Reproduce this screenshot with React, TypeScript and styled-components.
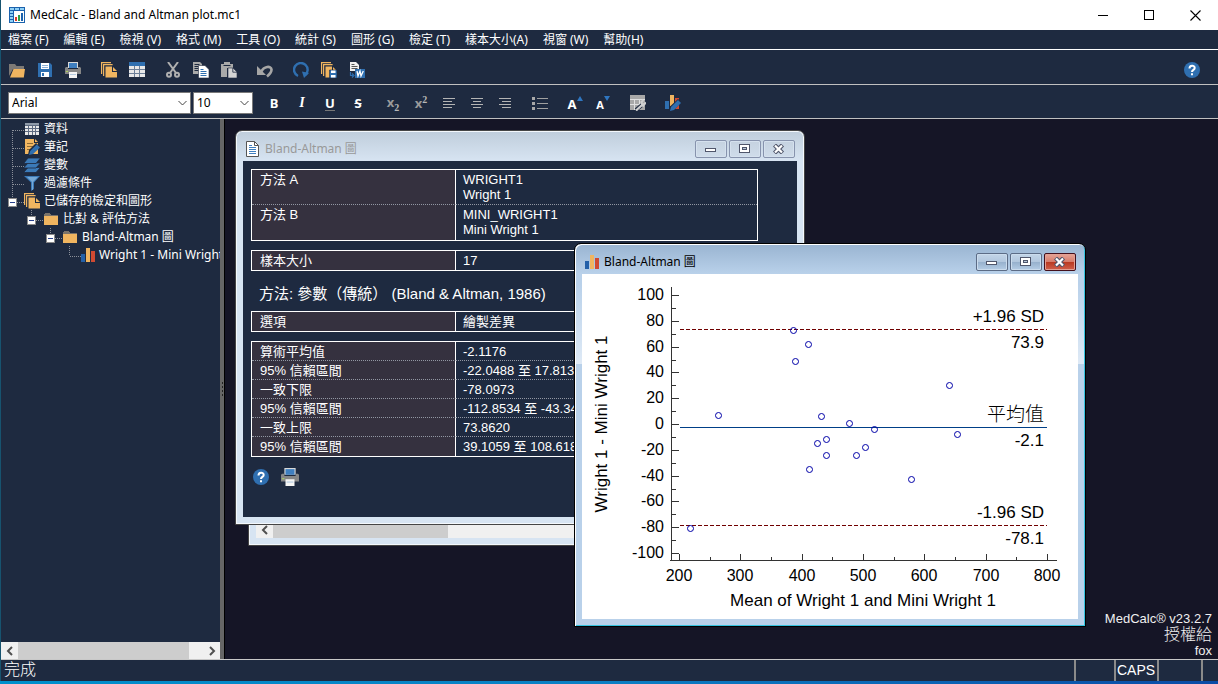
import React from 'react';
import styled, { createGlobalStyle, css } from 'styled-components';

const navy = '#1e2a40';
const desk = '#151526';
const ui = `"Noto Sans", "Noto Sans CJK TC", sans-serif`;
const arial = `"Liberation Sans", "Noto Sans CJK TC", sans-serif`;

const Global = createGlobalStyle`
  *, *::before, *::after { box-sizing: border-box; }
  body { margin: 0; background: ${desk}; font-family: ${ui}; font-size: 12px; color: #fff; }
  button { appearance: none; background: none; border: 0; padding: 0; margin: 0; color: inherit; font: inherit; }
  svg { display: block; flex: none; }
`;

/* ---------- frame ---------- */
const Shell = styled.div`
  min-height: 100vh;
  display: flex;
  flex-direction: column;
  border-left: 1px solid #17536f;
  background: ${navy};
`;
const TitleBar = styled.header`
  height: 30px;
  display: flex;
  align-items: center;
  background: #fff;
  color: #000;
  padding-left: 8px;
  gap: 5px;
`;
const AppTitle = styled.h1`
  flex: 1;
  margin: 0;
  font-size: 12px;
  font-weight: 400;
  line-height: 16px;
`;
const Controls = styled.div`
  display: flex;
`;
const SystemButton = styled.button`
  width: 46px;
  height: 28px;
  display: grid;
  place-items: center;
`;
const MenuBar = styled.nav`
  height: 20px;
  display: flex;
  align-items: center;
  gap: 15px;
  padding-left: 7px;
  border-bottom: 1px solid #fff;
`;
const MenuItem = styled.button`
  line-height: 18px;
  white-space: nowrap;
`;
const Toolbar = styled.div`
  height: 35px;
  display: flex;
  align-items: center;
  gap: 8px;
  padding: 6px 12px 0 2px;
  border-bottom: 1px solid #c0c0c0;
`;
const FormatBar = styled.div`
  height: 34px;
  display: flex;
  align-items: center;
  gap: 7px;
  padding: 3px 0 0 7px;
  border-bottom: 1px solid #c0c0c0;
`;
const Group = styled.div<{ $push?: boolean }>`
  display: flex;
  ${(p) => p.$push && css`margin-left: auto;`}
`;
const ToolButton = styled.button`
  width: 28px;
  height: 24px;
  display: grid;
  place-items: center;
`;
const Fields = styled.div`
  display: flex;
  gap: 2px;
`;
const SelectBox = styled.div<{ $w: number }>`
  position: relative;
  width: ${(p) => p.$w}px;
  select {
    appearance: none;
    width: 100%;
    height: 22px;
    padding: 0 0 2px 3px;
    border: 1px solid #7a7a7a;
    border-radius: 0;
    background: #fff;
    color: #000;
    font: 12px ${ui};
  }
  svg {
    position: absolute;
    right: 4px;
    top: 8px;
    pointer-events: none;
  }
`;
const Body = styled.div`
  flex: 1;
  display: flex;
  min-height: 540px;
`;

/* ---------- tree ---------- */
const Side = styled.aside`
  width: 219px;
  flex: none;
  display: flex;
  flex-direction: column;
`;
const Tree = styled.ul`
  flex: 1;
  list-style: none;
  margin: 0;
  padding: 1px 0 0;
  overflow: hidden;
`;
const TreeRow = styled.li<{ $level: number }>`
  height: 18px;
  display: flex;
  align-items: center;
  padding-left: ${(p) => 7 + p.$level * 19}px;
`;
const TreeLabel = styled.span`
  padding-left: 4px;
  line-height: 18px;
  white-space: nowrap;
`;
const ScrollBar = styled.div<{ $h: number }>`
  display: flex;
  height: ${(p) => p.$h}px;
  background: #f0f0f0;
`;
const ScrollArrow = styled.button`
  width: 17px;
  display: grid;
  place-items: center;
`;
const ScrollTrack = styled.div`
  flex: 1;
  display: flex;
`;
const ScrollThumb = styled.div<{ $w: number }>`
  width: ${(p) => p.$w}px;
  background: #cdcdcd;
`;
const Splitter = styled.div`
  width: 5px;
  display: flex;
  align-items: center;
  background: #666;
  border-right: 1px solid #000;
`;

/* ---------- child windows ---------- */
const Desktop = styled.main`
  flex: 1;
  position: relative;
  overflow: hidden;
  background: ${desk};
`;
const Win = styled.section<{ $x: number; $y: number; $w: number; $h: number; $active?: boolean }>`
  position: absolute;
  left: ${(p) => p.$x}px;
  top: ${(p) => p.$y}px;
  width: ${(p) => p.$w}px;
  height: ${(p) => p.$h}px;
  display: flex;
  flex-direction: column;
  padding: 0 7px 7px;
  border: 1px solid ${(p) => (p.$active ? '#000' : '#454545')};
  border-radius: 7px 7px 0 0;
  ${(p) =>
    p.$active
      ? css`
          box-shadow: inset 1px 1px #fff, inset -1px -1px #35c3e0;
          background: linear-gradient(#99b4d1 0, #b9d1ea 30px, #b9d1ea 40px, #dfeaf6 120px, #b9d1ea 120px);
        `
      : css`
          box-shadow: inset 0 0 0 1px #f4f8fc;
          background: linear-gradient(#bfcddb 0, #d7e4f2 30px);
        `}
`;
const WinTitle = styled.header<{ $active?: boolean }>`
  height: 30px;
  flex: none;
  display: flex;
  align-items: center;
  gap: 5px;
  padding: 6px 2px 0 3px;
  color: ${(p) => (p.$active ? '#000' : '#999')};
  h2 {
    flex: 1;
    margin: 0;
    font-size: 12px;
    font-weight: 400;
    line-height: 16px;
  }
`;
const WinControls = styled.div`
  display: flex;
  gap: 2px;
`;
const WinButton = styled.button<{ $tone: 'dim' | 'blue' | 'red' }>`
  width: 32px;
  height: 18px;
  display: grid;
  place-items: center;
  border-radius: 2px;
  ${(p) =>
    p.$tone === 'dim'
      ? css`
          border: 1px solid #8793ad;
          background: linear-gradient(#c5d2e0, #cfdcea);
          box-shadow: inset 0 0 0 1px #d5e1ee;
        `
      : p.$tone === 'blue'
      ? css`
          border: 1px solid #5c6c86;
          background: linear-gradient(#c3d5e8 0, #b2c7de 48%, #96b0cc 50%, #b5cde6 100%);
          box-shadow: inset 0 0 0 1px #cbdced;
        `
      : css`
          border: 1px solid #43101c;
          background: linear-gradient(#e5a598 0, #d77c6b 48%, #b83820 50%, #d0604c 100%);
          box-shadow: inset 0 0 0 1px #e2a094;
        `}
`;
const Report = styled.div`
  flex: 1;
  padding: 8px 39px 0 8px;
  overflow: hidden;
  background: ${navy};
  font-family: ${arial};
  font-size: 13px;
  line-height: 15px;
`;
const Sheet = styled.div`
  flex: 1;
  background: #fff;
`;
const DataTable = styled.table<{ $row: number }>`
  width: 100%;
  margin-bottom: 9px;
  border: 1px solid #fff;
  border-spacing: 0;
  table-layout: fixed;
  th, td {
    height: ${(p) => p.$row}px;
    padding: 2px 8px 0;
    text-align: left;
    vertical-align: top;
    font-weight: 400;
    white-space: pre-line;
  }
  td { padding-left: 7px; }
  th {
    width: 204px;
    background: #35313f;
    border-right: 1px solid #fff;
  }
  tr:not(:last-child) > * { border-bottom: 1px dotted #9297a3; }
`;
const Method = styled.p`
  margin: 0;
  padding: 4px 8px 0;
  height: 31px;
  font-size: 15px;
  line-height: 20px;
  white-space: nowrap;
`;
const Actions = styled.div`
  display: flex;
  align-items: center;
  gap: 12px;
  padding: 2px;
`;
const License = styled.div`
  position: absolute;
  right: 6px;
  bottom: 0;
  text-align: right;
  font: 13px/16px ${arial};
  color: #f0f0f0;
  big { display: block; font-size: 16px; font-weight: 300; }
`;

/* ---------- status bar ---------- */
const Status = styled.footer`
  height: 22px;
  display: flex;
  border-top: 1px solid #c8c8c8;
  font: 14px/20px ${arial};
`;
const StatusText = styled.div`
  flex: 1;
  padding-left: 3px;
  font-size: 16px;
  font-weight: 300;
`;
const StatusCell = styled.div<{ $w: number }>`
  width: ${(p) => p.$w}px;
  border-left: 2px solid #8a8a8a;
  padding-left: 1px;
`;
const BottomEdge = styled.div`
  height: 3px;
  margin-left: -1px;
  background: linear-gradient(90deg, #0090cc, #0a7fc4 50%, #0a4ba6);
`;

/* ---------- icons ---------- */
const orange = '#f0b560';
const blue = '#2f6fb0';
const grey = '#9a9a9a';

type IconProps = { children: React.ReactNode; w?: number; h?: number; crisp?: boolean };
const Icon = ({ children, w = 16, h = 16, crisp }: IconProps) => (
  <svg width={w} height={h} viewBox={`0 0 ${w} ${h}`} fill="none" shapeRendering={crisp ? 'crispEdges' : undefined} aria-hidden="true">
    {children}
  </svg>
);

const LogoIcon = () => (
  <Icon crisp>
    <path fill="#1b62ad" d="M0 0h16v16H0z" />
    <path fill="#8fd0f5" d="M1 1h4v2H1zM6 1h4v2H6zM11 1h4v2h-4zM1 4h3v2H1zM1 7h3v2H1zM1 10h3v2H1zM1 13h3v2H1z" />
    <path fill="#fff" d="M5 4h10v11H5z" />
    <path fill="#d93a2b" d="M6 10h2v4H6z" />
    <path fill="#2f9e44" d="M9 8h2v6H9z" />
    <path fill="#1b62ad" d="M12 6h2v8h-2z" />
  </Icon>
);
const OpenIcon = () => (
  <Icon>
    <path fill="#7d7975" d="M0 2h6l1.500 2H15v3H4L0 14z" />
    <path fill={orange} d="M4.500 7H16l-1.200 8.500H1z" />
  </Icon>
);
const SaveIcon = () => (
  <Icon>
    <path fill={blue} d="M1 1h12l2 2v12H1z" />
    <path fill="#fff" d="M4 1h8v6H4zM4 10h8v5H4z" />
    <path fill="#8ab0d6" d="M5 3h6v1H5zM5 5h6v1H5z" />
    <path fill={blue} d="M5 11h2v3H5z" />
  </Icon>
);
const PrintIcon = ({ w = 16 }: { w?: number }) => (
  <svg width={w} height={w} viewBox="0 0 16 16" aria-hidden="true">
    <path fill="#d8d8d8" d="M3 0h10v6H3z" />
    <path fill="#3f7fc0" d="M4 1h8v5H4z" />
    <path fill="#868686" d="M1 5h2v2h10V5h2l1 1v6H0V6z" />
    <path fill="#f4f4f4" d="M4 10h8v6H4z" />
    <path fill="#b5cbe0" d="M5 12h6v1H5z" />
    <path fill="#a8d060" d="M1 9h2v1H1z" />
  </svg>
);
const StackIcon = ({ w = 16, disk }: { w?: number; disk?: boolean }) => (
  <svg width={w} height={w} viewBox="0 0 16 16" aria-hidden="true">
    <path fill="none" stroke={orange} strokeWidth="1.200" d="M.6 12V.6h9.400M2.600 14V2.600h9" />
    <path fill={orange} d="M4.500 4.500H11V10h5v5.500H4.500z" />
    <path fill={orange} d="M12 5l4 4h-4z" />
    {disk && (
      <>
        <path fill={blue} stroke={navy} strokeWidth=".6" d="M8.500 8H16v8H8.500z" />
        <path fill="#fff" d="M10 8.500h4.500v2.500H10zM10 13h4.500v2.500H10z" />
      </>
    )}
  </svg>
);
const GridIcon = ({ small }: { small?: boolean }) => (
  <Icon crisp w={small ? 14 : 16}>
    <path fill="#e8e8e8" d={small ? 'M0 2h14v12H0z' : 'M0 0h16v15H0z'} />
    <path fill={small ? '#8f9aa8' : blue} d={small ? 'M0 2h14v2H0z' : 'M0 0h16v4H0z'} />
    <path
      stroke={small ? '#5d6a80' : '#6c7f98'}
      d={small ? 'M0 4.500h14M0 7.500h14M0 10.500h14M3.500 4v10M7.500 4v10M10.500 4v10' : 'M0 7.500h16M0 11.500h16M5.500 4v11M10.500 4v11'}
    />
  </Icon>
);
const CutIcon = () => (
  <Icon>
    <g stroke="#b0b0b0" strokeWidth="2">
      <path d="M3 0l8 11M13 0L5 11" />
      <circle cx="4" cy="12.800" r="2" />
      <circle cx="12" cy="12.800" r="2" />
    </g>
  </Icon>
);
const CopyIcon = () => (
  <Icon>
    <path fill="#a9a9a9" d="M0 0h7l2 2v10H0z" />
    <path stroke={navy} d="M1.500 2.500h5M1.500 4.500h4M1.500 6.500h4M1.500 8.500h4" />
    <path fill="#fff" stroke={navy} strokeWidth=".6" d="M5.500 3.500h6.500l4 4V16H5.500z" />
    <path stroke={blue} d="M7.500 7.500h3M7.500 9.500h6M7.500 11.500h6M7.500 13.500h6" />
  </Icon>
);
const PasteIcon = () => (
  <Icon>
    <path fill="#a9a9a9" d="M0 2h3V0h6v2h3v4H6v9H0z" />
    <path fill={navy} d="M2.500 3h7v1h-7z" />
    <path fill="#d4d4d4" stroke={navy} strokeWidth=".6" d="M7 6h5l4 4v6H7z" />
    <path stroke={navy} strokeWidth=".8" d="M11.800 6v4.200H16" />
  </Icon>
);
const UndoIcon = () => (
  <Icon>
    <path stroke="#a6a6a6" strokeWidth="2.600" d="M4 10c3-6 10-6.500 10.500-2.500C14.700 10 13 12 10 14.500" />
    <path fill="#a6a6a6" d="M0 4v9h9z" />
  </Icon>
);
const RefreshIcon = () => (
  <Icon>
    <path stroke={blue} strokeWidth="2.400" d="M5 14A6.800 6.800 0 1 1 12 13.200" />
    <path fill={blue} d="M9 9.500l7 1.500-5 5z" />
  </Icon>
);
const WordIcon = () => (
  <Icon>
    <path fill="#f0f0f0" d="M1 0h6l3 3v6H1z" />
    <path stroke="#555" d="M2.500 2.500h3M2.500 4.500h6M2.500 6.500h6" />
    <path fill={blue} d="M6 7h10v9H6z" />
    <path stroke="#fff" strokeWidth="1.300" d="M8 9l1 5 2-5 1 5 2.300-5" />
    <path stroke={blue} strokeWidth="1.200" d="M1.500 10v3.500H4M3 11.500l2 2-2 2" />
  </Icon>
);
const HelpIcon = () => (
  <Icon>
    <circle cx="8" cy="8" r="8" fill={blue} />
    <path stroke="#fff" strokeWidth="2" d="M5.500 6.500C5.500 3 10.700 3 10.700 6c0 2-2.700 1.800-2.700 4" />
    <path fill="#fff" d="M7 11.300h2v2H7z" />
  </Icon>
);
const Letter = styled.span<{ $i?: boolean; $u?: boolean; $s?: boolean }>`
  font: 700 13px/14px "Noto Sans", sans-serif;
  ${(p) => p.$i && css`font-family: "Liberation Serif", serif; font-style: italic; font-size: 14px;`}
  ${(p) => p.$u && css`border-bottom: 1px solid #777;`}
  ${(p) => p.$s && css`text-decoration: line-through; text-decoration-thickness: 1px;`}
`;
const ScriptLetter = styled.span`
  font: 700 13px/16px "Noto Sans", sans-serif;
  color: ${grey};
  sub, sup { font: 700 10px/10px "Liberation Serif", serif; color: #b8b8b8; }
`;
const AlignIcon = ({ x }: { x: [number, number, number, number] }) => (
  <Icon crisp w={12} h={12}>
    <path stroke="#b4b4b4" d={`M0 1.500h12M${x[0]} 4.500h${x[1]}M0 7.500h12M${x[2]} 10.500h${x[3]}`} />
  </Icon>
);
const ListIcon = () => (
  <Icon crisp w={16} h={14}>
    <path stroke="#a0a0a0" d="M5 2.500h11M5 7.500h11M5 12.500h11" />
    <path fill="#a8a8a8" d="M0 1h3v3H0zM0 6h3v3H0zM0 11h3v3H0z" />
  </Icon>
);
const SizeMark = styled.span<{ $small?: boolean }>`
  display: flex;
  align-items: flex-start;
  height: 15px;
  font: 700 ${(p) => (p.$small ? 11 : 13)}px/${(p) => (p.$small ? 18 : 17)}px "Noto Sans", sans-serif;
`;
const TableToolIcon = () => (
  <Icon>
    <path fill="#a8a8a8" d="M0 0h15v15H0z" />
    <path stroke="#e0e0e0" d="M0 4.500h15M0 9.500h15M4.500 4v11M9.500 4v11" />
    <path stroke={navy} strokeWidth="4" d="M6 15l6-5" />
    <path stroke="#d0d0d0" strokeWidth="2.200" d="M6 15.500l5.500-5M16 7.500l-2 2-2-.5-.5-2 2-2M11 10.500l3 .5" />
  </Icon>
);
const ChartToolIcon = () => (
  <Icon>
    <path fill={blue} d="M0 6h4v8H0z" />
    <path fill={orange} d="M5 0h4v11H5z" />
    <path fill="#cf4a32" d="M10 3h4v11h-4z" />
    <path fill={navy} d="M4 16l1.500-5L13 4l3.500 3L9 15z" />
    <path fill={blue} d="M5 16l1-4 7-7 3 3-7 7z" />
  </Icon>
);
const BarsIcon = () => (
  <Icon w={14} h={14} crisp>
    <path fill="#2460a8" d="M0 6h4v8H0z" />
    <path fill={orange} d="M5 0h4v14H5z" />
    <path fill="#cf4a32" d="M10 3h4v11h-4z" />
  </Icon>
);
const NotesIcon = () => (
  <Icon>
    <path fill={orange} d="M1 0h9v4h4v11H1z" />
    <path fill={orange} d="M11 0l3 3h-3z" />
    <path stroke="#8c6a35" d="M3 4.500h6M3 7.500h8M3 10.500h5" />
    <path fill={navy} d="M4 16l1-5 7-7 4 3.500-8 8z" />
    <path fill={blue} d="M5 16l1.200-4 6.500-6.500L16 8.500 9 15z" />
  </Icon>
);
const LayersIcon = () => (
  <Icon>
    <path fill="#3b7ab8" stroke={navy} strokeWidth=".8" d="M4 10.500h12.400l-4.400 5H-.4z" />
    <path fill="#3b7ab8" stroke={navy} strokeWidth=".8" d="M4 6h12.400L12 11H-.4z" />
    <path fill="#3b7ab8" stroke={navy} strokeWidth=".8" d="M4 1h12.400L12 6.500H-.4z" />
  </Icon>
);
const FunnelIcon = () => (
  <Icon>
    <path fill="#3b7ab8" d="M0 1h16l-6 6.500V14l-3 2V7.500z" />
    <path fill="#9fc6e8" d="M3 2h11L9 7v8L8 15V7z" opacity=".6" />
  </Icon>
);
const FolderIcon = () => (
  <Icon w={14} h={14} crisp>
    <path fill="#7a736a" d="M1 1h5l1 2h7v2H0V2z" />
    <path fill={orange} d="M0 4h14v9H0z" />
  </Icon>
);
const DocIcon = () => (
  <Icon w={14}>
    <path fill="#fff" stroke="#555" d="M.5.500h8l4 4v11H.5z" />
    <path stroke="#555" d="M8.500.500v4h4" />
    <path stroke="#3f7fc0" d="M3 4.500h3M3 6.500h7M3 8.500h7M3 10.500h7M3 12.500h7" />
  </Icon>
);
const Chevron = ({ left }: { left?: boolean }) => (
  <Icon w={8} h={10}>
    <path stroke="#505050" strokeWidth="2" d={left ? 'M6 1L2 5l4 4' : 'M2 1l4 4-4 4'} />
  </Icon>
);
const DownChevron = () => (
  <Icon w={9} h={7}>
    <path stroke="#444" d="M.5 1l4 4 4-4" />
  </Icon>
);

const MinGlyph = () => (
  <Icon w={12} h={8} crisp>
    <path fill="#fff" stroke="#50566b" d="M.5 3.500h10v3H.5z" />
  </Icon>
);
const MaxGlyph = () => (
  <Icon w={12} h={10} crisp>
    <path fill="#fff" stroke="#50566b" d="M.5.500h10v8H.5z" />
    <path fill="#b8c8da" stroke="#50566b" d="M3.500 3.500h4v2h-4z" />
  </Icon>
);
const CloseGlyph = () => (
  <Icon w={12} h={10}>
    <path stroke="#50566b" strokeWidth="4.400" d="M1.500 1l8 8M9.500 1l-8 8" />
    <path stroke="#fff" strokeWidth="2.200" d="M2 1.500l7 7M9 1.500l-7 7" />
  </Icon>
);

const WinFrameControls = ({ active }: { active?: boolean }) => (
  <WinControls>
    <WinButton $tone={active ? 'blue' : 'dim'} aria-label="Minimize"><MinGlyph /></WinButton>
    <WinButton $tone={active ? 'blue' : 'dim'} aria-label="Maximize"><MaxGlyph /></WinButton>
    <WinButton $tone={active ? 'red' : 'dim'} aria-label="Close"><CloseGlyph /></WinButton>
  </WinControls>
);

/* ---------- data ---------- */
const menus = ['檔案 (F)', '編輯 (E)', '檢視 (V)', '格式 (M)', '工具 (O)', '統計 (S)', '圖形 (G)', '檢定 (T)', '樣本大小(A)', '視窗 (W)', '幫助(H)'];

const toolGroups: [string, React.ReactNode][][] = [
  [['Open', <OpenIcon />], ['Save', <SaveIcon />], ['Print', <PrintIcon />]],
  [['Contents', <StackIcon />], ['Data', <GridIcon />]],
  [['Cut', <CutIcon />], ['Copy', <CopyIcon />], ['Paste', <PasteIcon />]],
  [['Undo', <UndoIcon />]],
  [['Recalculate', <RefreshIcon />], ['Save results', <StackIcon disk />], ['Export to Word', <WordIcon />]],
];

const Tri = ({ down }: { down?: boolean }) => (
  <Icon w={6} h={5}>
    <path fill="#2f76c0" d={down ? 'M0 0h6L3 5z' : 'M3 0l3 5H0z'} />
  </Icon>
);
const formatGroups: [string, React.ReactNode][][] = [
  [
    ['Bold', <Letter>B</Letter>],
    ['Italic', <Letter $i>I</Letter>],
    ['Underline', <Letter $u>U</Letter>],
    ['Strikethrough', <Letter $s>S</Letter>],
  ],
  [
    ['Subscript', <ScriptLetter>x<sub>2</sub></ScriptLetter>],
    ['Superscript', <ScriptLetter>x<sup>2</sup></ScriptLetter>],
    ['Align left', <AlignIcon x={[0, 9, 0, 9]} />],
    ['Center', <AlignIcon x={[2, 8, 2, 8]} />],
    ['Align right', <AlignIcon x={[3, 9, 3, 9]} />],
  ],
  [['List', <ListIcon />]],
  [
    ['Larger', <SizeMark>A<Tri /></SizeMark>],
    ['Smaller', <SizeMark $small>A<Tri down /></SizeMark>],
  ],
  [['Table options', <TableToolIcon />]],
  [['Graph options', <ChartToolIcon />]],
];

type Node = { level: number; label: string; icon: React.ReactNode; joint: 'first' | 'mid' | 'end'; box?: boolean };
const nodes: Node[] = [
  { level: 0, label: '資料', icon: <GridIcon small />, joint: 'first' },
  { level: 0, label: '筆記', icon: <NotesIcon />, joint: 'mid' },
  { level: 0, label: '變數', icon: <LayersIcon />, joint: 'mid' },
  { level: 0, label: '過濾條件', icon: <FunnelIcon />, joint: 'mid' },
  { level: 0, label: '已儲存的檢定和圖形', icon: <StackIcon />, joint: 'end', box: true },
  { level: 1, label: '比對 & 評估方法', icon: <FolderIcon />, joint: 'end', box: true },
  { level: 2, label: 'Bland-Altman 圖', icon: <FolderIcon />, joint: 'end', box: true },
  { level: 3, label: 'Wright 1 - Mini Wright 1', icon: <BarsIcon />, joint: 'end' },
];
const IconCell = styled.span`
  width: 16px;
  display: grid;
  justify-items: center;
`;
const Joint = ({ kind, box }: { kind: Node['joint']; box?: boolean }) => (
  <Icon w={16} h={18} crisp>
    <path
      stroke="#8a8f99"
      strokeDasharray="1 1"
      d={kind === 'first' ? 'M4.500 10v8M5 10.500h11' : kind === 'mid' ? 'M4.500 0v18M5 10.500h11' : 'M4.500 0v10M5 10.500h11'}
    />
    {box && (
      <>
        <path fill="#fff" stroke="#8a8a8a" d="M.5 6.500h8v8h-8z" />
        <path stroke="#27408b" d="M2 10.500h5" />
      </>
    )}
  </Icon>
);

const limits = [
  ['算術平均值', '-2.1176'],
  ['95% 信賴區間', '-22.0488 至 17.8135'],
  ['一致下限', '-78.0973'],
  ['95% 信賴區間', '-112.8534 至 -43.3411'],
  ['一致上限', '73.8620'],
  ['95% 信賴區間', '39.1059 至 108.6182'],
];

/* ---------- chart ---------- */
const sx = (v: number) => Math.round(97 + ((v - 200) * 368) / 600);
const sy = (v: number) => Math.round(150 - v * 1.29);
const points = [
  [136, 141], [211, 56], [226, 70], [213, 87], [239, 142], [267, 149], [292, 155], [235, 169], [244, 165],
  [244, 181], [274, 181], [283, 173], [227, 195], [329, 205], [367, 111], [375, 160], [108, 254],
];
const yTicks = Array.from({ length: 21 }, (_, i) => 100 - i * 10);
const xTicks = Array.from({ length: 13 }, (_, i) => 200 + i * 50);

const ChartSvg = styled.svg`
  width: 100%;
  font-family: ${arial};
  font-size: 16px;
  fill: #000;
  .axis { stroke: #333; shape-rendering: crispEdges; }
  .limit { stroke: #700000; stroke-dasharray: 4 2; shape-rendering: crispEdges; }
  .mean { stroke: #003f87; shape-rendering: crispEdges; }
  .note, .title { font-size: 17px; }
  .note, .ytick { text-anchor: end; }
  .cjk { font-size: 19px; font-weight: 300; }
  .xtick, .title { text-anchor: middle; }
`;
const Chart = () => (
  <ChartSvg viewBox="0 0 496 345" role="img" aria-label="Bland-Altman plot">
    <path className="axis" d="M89.500 13v274M88 286.500h387" />
    {yTicks.map((v) => (
      <path key={v} className="axis" d={`M90 ${sy(v) + 0.5}h${v % 20 ? 4 : 7}`} />
    ))}
    {xTicks.map((v) => (
      <path key={v} className="axis" d={`M${sx(v) + 0.5} ${v % 100 ? 283 : 280}V286`} />
    ))}
    {yTicks.filter((v) => v % 20 === 0).map((v) => (
      <text key={v} className="ytick" x="82" y={sy(v) + 5}>{v}</text>
    ))}
    {xTicks.filter((v) => v % 100 === 0).map((v) => (
      <text key={v} className="xtick" x={sx(v)} y="307">{v}</text>
    ))}
    <path className="limit" d="M98 55.500h367M98 251.500h367" />
    <path className="mean" d="M98 153.500h367" />
    {points.map(([x, y]) => (
      <circle key={`${x}-${y}`} cx={x + 0.5} cy={y + 0.5} r="3" fill="none" stroke="#0000a8" />
    ))}
    <text className="note" x="462" y="48">+1.96 SD</text>
    <text className="note" x="462" y="74">73.9</text>
    <text className="note cjk" x="462" y="147">平均值</text>
    <text className="note" x="462" y="172">-2.1</text>
    <text className="note" x="462" y="244">-1.96 SD</text>
    <text className="note" x="462" y="270">-78.1</text>
    <text className="title" x="281" y="332">Mean of Wright 1 and Mini Wright 1</text>
    <text className="title" transform="translate(25 150) rotate(-90)">Wright 1 - Mini Wright 1</text>
  </ChartSvg>
);

const BackPane = styled.div`
  flex: 1;
  display: flex;
  flex-direction: column;
  justify-content: flex-end;
  background: ${navy};
`;
const ReportButton = styled.button`
  display: grid;
  place-items: center;
  height: 18px;
`;

export default function App() {
  return (
    <Shell>
      <Global />
      <TitleBar>
        <LogoIcon />
        <AppTitle>MedCalc - Bland and Altman plot.mc1</AppTitle>
        <Controls>
          <SystemButton aria-label="Minimize">
            <Icon w={11} h={11} crisp><path stroke="#000" d="M0 5.500h10" /></Icon>
          </SystemButton>
          <SystemButton aria-label="Maximize">
            <Icon w={11} h={11} crisp><path stroke="#000" d="M.5.500h9v9h-9z" /></Icon>
          </SystemButton>
          <SystemButton aria-label="Close">
            <Icon w={11} h={11}><path stroke="#000" strokeWidth="1.100" d="M.5.500l10 10M10.500.500l-10 10" /></Icon>
          </SystemButton>
        </Controls>
      </TitleBar>
      <MenuBar>
        {menus.map((m) => <MenuItem key={m}>{m}</MenuItem>)}
      </MenuBar>
      <Toolbar>
        {toolGroups.map((g) => (
          <Group key={g[0][0]}>
            {g.map(([name, icon]) => <ToolButton key={name} aria-label={name}>{icon}</ToolButton>)}
          </Group>
        ))}
        <Group $push>
          <ToolButton aria-label="Help"><HelpIcon /></ToolButton>
        </Group>
      </Toolbar>
      <FormatBar>
        <Fields>
          <SelectBox $w={183}>
            <select aria-label="Font"><option>Arial</option></select>
            <DownChevron />
          </SelectBox>
          <SelectBox $w={60}>
            <select aria-label="Font size"><option>10</option></select>
            <DownChevron />
          </SelectBox>
        </Fields>
        {formatGroups.map((g) => (
          <Group key={g[0][0]}>
            {g.map(([name, icon]) => <ToolButton key={name} aria-label={name}>{icon}</ToolButton>)}
          </Group>
        ))}
      </FormatBar>
      <Body>
        <Side>
          <Tree>
            {nodes.map((n) => (
              <TreeRow key={n.label} $level={n.level}>
                <Joint kind={n.joint} box={n.box} />
                <IconCell>{n.icon}</IconCell>
                <TreeLabel>{n.label}</TreeLabel>
              </TreeRow>
            ))}
          </Tree>
          <ScrollBar $h={17}>
            <ScrollArrow aria-label="Scroll left"><Chevron left /></ScrollArrow>
            <ScrollTrack><ScrollThumb $w={171} /></ScrollTrack>
            <ScrollArrow aria-label="Scroll right"><Chevron /></ScrollArrow>
          </ScrollBar>
        </Side>
        <Splitter>
          <Icon w={4} h={14} crisp><path stroke="#222" strokeDasharray="2 2" d="M2.500 0v14" /></Icon>
        </Splitter>
        <Desktop>
          <License>
            MedCalc® v23.2.7
            <big>授權給</big>
            fox
          </License>
          <Win $x={23} $y={160} $w={500} $h={267}>
            <BackPane>
              <ScrollBar $h={17}>
                <ScrollArrow aria-label="Scroll left"><Chevron left /></ScrollArrow>
                <ScrollTrack><ScrollThumb $w={175} /></ScrollTrack>
                <ScrollArrow aria-label="Scroll right"><Chevron /></ScrollArrow>
              </ScrollBar>
            </BackPane>
          </Win>
          <Win $x={10} $y={11} $w={570} $h={395}>
            <WinTitle>
              <DocIcon />
              <h2>Bland-Altman 圖</h2>
              <WinFrameControls />
            </WinTitle>
            <Report>
              <DataTable $row={35}>
                <tbody>
                  <tr><th scope="row">方法 A</th><td>{'WRIGHT1\nWright 1'}</td></tr>
                  <tr><th scope="row">方法 B</th><td>{'MINI_WRIGHT1\nMini Wright 1'}</td></tr>
                </tbody>
              </DataTable>
              <DataTable $row={19}>
                <tbody><tr><th scope="row">樣本大小</th><td>17</td></tr></tbody>
              </DataTable>
              <Method>方法: 參數（傳統） (Bland &amp; Altman, 1986)</Method>
              <DataTable $row={19}>
                <tbody><tr><th scope="row">選項</th><td>繪製差異</td></tr></tbody>
              </DataTable>
              <DataTable $row={19}>
                <tbody>
                  {limits.map(([k, v]) => <tr key={v}><th scope="row">{k}</th><td>{v}</td></tr>)}
                </tbody>
              </DataTable>
              <Actions>
                <ReportButton aria-label="Help"><HelpIcon /></ReportButton>
                <ReportButton aria-label="Print"><PrintIcon w={18} /></ReportButton>
              </Actions>
            </Report>
          </Win>
          <Win $x={349} $y={124} $w={512} $h={384} $active>
            <WinTitle $active>
              <BarsIcon />
              <h2>Bland-Altman 圖</h2>
              <WinFrameControls active />
            </WinTitle>
            <Sheet><Chart /></Sheet>
          </Win>
        </Desktop>
      </Body>
      <Status>
        <StatusText>完成</StatusText>
        <StatusCell $w={40} />
        <StatusCell $w={43}>CAPS</StatusCell>
        <StatusCell $w={44} />
        <StatusCell $w={17} />
      </Status>
      <BottomEdge />
    </Shell>
  );
}
